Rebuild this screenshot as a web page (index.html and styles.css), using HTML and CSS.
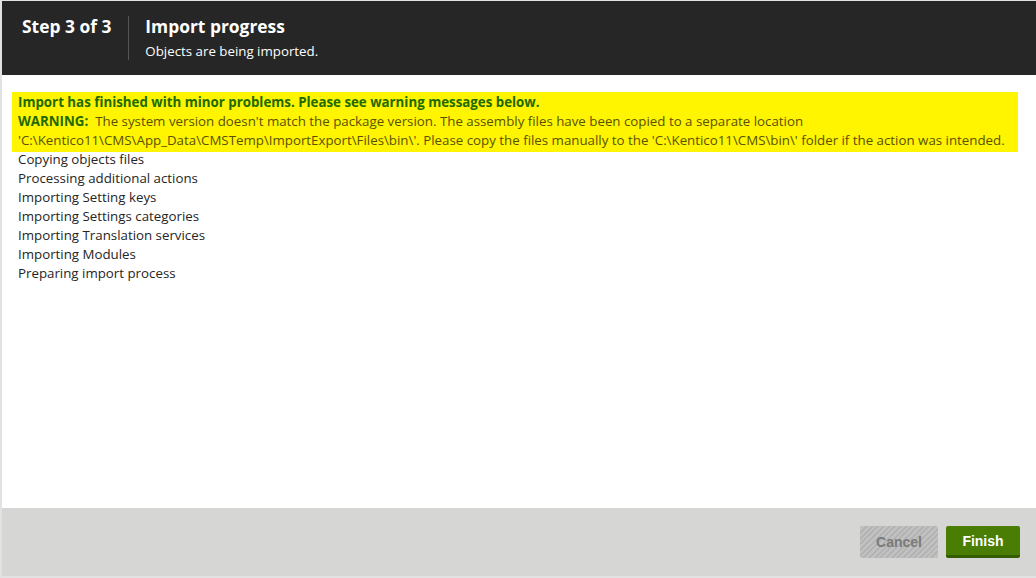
FILE: index.html
```html
<!DOCTYPE html>
<html lang="en">
<head>
    <meta charset="UTF-8">
    <title>Import progress</title>
    <link rel="stylesheet" href="styles.css">
</head>
<body>
    <div class="wizard">
        <div class="header">
            <div class="step">Step 3 of 3</div>
            <div class="title">
                <h1>Import progress</h1>
                <p>Objects are being imported.</p>
            </div>
        </div>
        <div class="content">
            <div class="warning">
                <div class="finished">Import has finished with minor problems. Please see warning messages below.</div>
                <div><b>WARNING:</b>&nbsp; The system version doesn't match the package version. The assembly files have been copied to a separate location<br>'C:\Kentico11\CMS\App_Data\CMSTemp\ImportExport\Files\bin\'. Please copy the files manually to the 'C:\Kentico11\CMS\bin\' folder if the action was intended.</div>
            </div>
            <ul class="log">
                <li>Copying objects files</li>
                <li>Processing additional actions</li>
                <li>Importing Setting keys</li>
                <li>Importing Settings categories</li>
                <li>Importing Translation services</li>
                <li>Importing Modules</li>
                <li>Preparing import process</li>
            </ul>
        </div>
        <div class="footer">
            <button type="button" class="btn cancel" disabled>Cancel</button>
            <button type="button" class="btn finish">Finish</button>
        </div>
    </div>
</body>
</html>
```

FILE: styles.css
```css
html, body {
    margin: 0;
    padding: 0;
    height: 100%;
}

body {
    font-family: "Open Sans", "Noto Sans", sans-serif;
    font-size: 13.3px;
    color: #262524;
    background-color: #e2e2e2;
}

.wizard {
    display: flex;
    flex-direction: column;
    height: 575px;
    margin: 1px 0 0 2px;
    background-color: #FFFFFF;
}

.header {
    display: flex;
    align-items: flex-start;
    height: 74px;
    background-color: #262626;
    color: #FFFFFF;
    padding: 0 0 0 20px;
}

.step {
    font-size: 17.4px;
    font-weight: bold;
    line-height: 20px;
    margin-top: 15px;
    padding: 0 17px 0 0;
    height: 44px;
    border-right: 1px solid #555555;
}

.title {
    padding: 14px 0 0 16px;
}

.title h1 {
    margin: 0;
    font-size: 17.4px;
    line-height: 22px;
}

.title p {
    margin: 5px 0 0;
    font-size: 13.3px;
}

.content {
    flex: 1;
    padding: 17px 18px 0 10px;
}

.warning {
    background-color: #fff500;
    color: #2d6600;
    padding: 1px 0 2px 6px;
    line-height: 19px;
}

.warning .finished,
.warning b {
    font-weight: bold;
    color: #216a00;
}

.warning div:last-child {
    color: #5a5100;
}

.log {
    list-style: none;
    margin: 0;
    padding: 0 0 0 6px;
    line-height: 19px;
    margin-top: -2px;
}

.footer {
    display: flex;
    justify-content: flex-end;
    gap: 8px;
    height: 68px;
    padding: 18px 16px 0 0;
    box-sizing: border-box;
    background-color: #d6d7d5;
}

.btn {
    font-family: "Liberation Sans", Arial, sans-serif;
    font-size: 14px;
    font-weight: bold;
    height: 32px;
    padding: 0 16px;
    border: none;
    border-radius: 2px;
    cursor: pointer;
}

.cancel {
    width: 78px;
    color: #7a7a7a;
    background: repeating-linear-gradient(135deg, #b4b4b4 0, #b4b4b4 2px, #c2c2c2 2px, #c2c2c2 4px);
    cursor: default;
}

.finish {
    width: 74px;
    color: #FFFFFF;
    background-color: #497d04;
    border-bottom: 3px solid #345c00;
}

.finish:hover {
    background-color: #3e6b02;
}
```
